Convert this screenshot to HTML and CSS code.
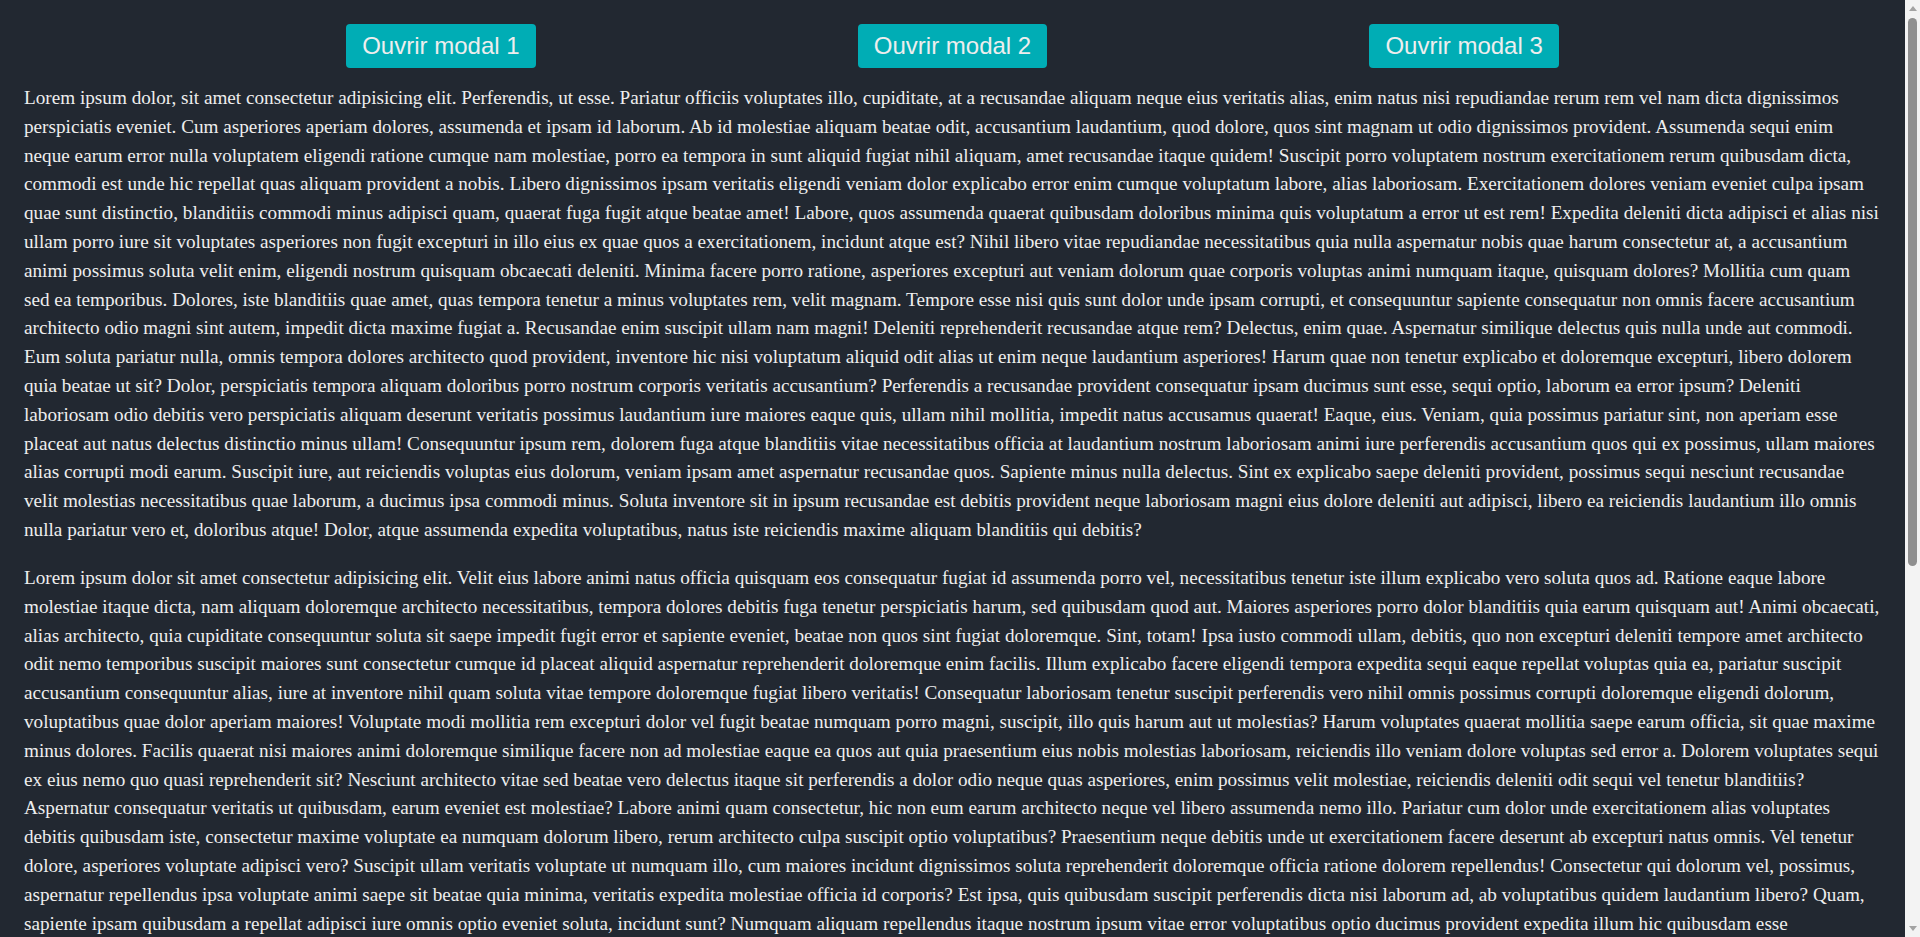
FILE: index.html
```html
<!DOCTYPE html>
<html lang="fr">
<head>
<meta charset="utf-8">
<title>Modals</title>
<link rel="stylesheet" href="styles.css">
</head>
<body>
<div class="actions">
  <button class="btn" type="button">Ouvrir modal 1</button>
  <button class="btn" type="button">Ouvrir modal 2</button>
  <button class="btn" type="button">Ouvrir modal 3</button>
</div>
<p class="text">Lorem ipsum dolor, sit amet consectetur adipisicing elit. Perferendis, ut esse. Pariatur officiis voluptates illo, cupiditate, at a recusandae aliquam neque eius veritatis alias, enim natus nisi repudiandae rerum rem vel nam dicta dignissimos perspiciatis eveniet. Cum asperiores aperiam dolores, assumenda et ipsam id laborum. Ab id molestiae aliquam beatae odit, accusantium laudantium, quod dolore, quos sint magnam ut odio dignissimos provident. Assumenda sequi enim neque earum error nulla voluptatem eligendi ratione cumque nam molestiae, porro ea tempora in sunt aliquid fugiat nihil aliquam, amet recusandae itaque quidem! Suscipit porro voluptatem nostrum exercitationem rerum quibusdam dicta, commodi est unde hic repellat quas aliquam provident a nobis. Libero dignissimos ipsam veritatis eligendi veniam dolor explicabo error enim cumque voluptatum labore, alias laboriosam. Exercitationem dolores veniam eveniet culpa ipsam quae sunt distinctio, blanditiis commodi minus adipisci quam, quaerat fuga fugit atque beatae amet! Labore, quos assumenda quaerat quibusdam doloribus minima quis voluptatum a error ut est rem! Expedita deleniti dicta adipisci et alias nisi ullam porro iure sit voluptates asperiores non fugit excepturi in illo eius ex quae quos a exercitationem, incidunt atque est? Nihil libero vitae repudiandae necessitatibus quia nulla aspernatur nobis quae harum consectetur at, a accusantium animi possimus soluta velit enim, eligendi nostrum quisquam obcaecati deleniti. Minima facere porro ratione, asperiores excepturi aut veniam dolorum quae corporis voluptas animi numquam itaque, quisquam dolores? Mollitia cum quam sed ea temporibus. Dolores, iste blanditiis quae amet, quas tempora tenetur a minus voluptates rem, velit magnam. Tempore esse nisi quis sunt dolor unde ipsam corrupti, et consequuntur sapiente consequatur non omnis facere accusantium architecto odio magni sint autem, impedit dicta maxime fugiat a. Recusandae enim suscipit ullam nam magni! Deleniti reprehenderit recusandae atque rem? Delectus, enim quae. Aspernatur similique delectus quis nulla unde aut commodi. Eum soluta pariatur nulla, omnis tempora dolores architecto quod provident, inventore hic nisi voluptatum aliquid odit alias ut enim neque laudantium asperiores! Harum quae non tenetur explicabo et doloremque excepturi, libero dolorem quia beatae ut sit? Dolor, perspiciatis tempora aliquam doloribus porro nostrum corporis veritatis accusantium? Perferendis a recusandae provident consequatur ipsam ducimus sunt esse, sequi optio, laborum ea error ipsum? Deleniti laboriosam odio debitis vero perspiciatis aliquam deserunt veritatis possimus laudantium iure maiores eaque quis, ullam nihil mollitia, impedit natus accusamus quaerat! Eaque, eius. Veniam, quia possimus pariatur sint, non aperiam esse placeat aut natus delectus distinctio minus ullam! Consequuntur ipsum rem, dolorem fuga atque blanditiis vitae necessitatibus officia at laudantium nostrum laboriosam animi iure perferendis accusantium quos qui ex possimus, ullam maiores alias corrupti modi earum. Suscipit iure, aut reiciendis voluptas eius dolorum, veniam ipsam amet aspernatur recusandae quos. Sapiente minus nulla delectus. Sint ex explicabo saepe deleniti provident, possimus sequi nesciunt recusandae velit molestias necessitatibus quae laborum, a ducimus ipsa commodi minus. Soluta inventore sit in ipsum recusandae est debitis provident neque laboriosam magni eius dolore deleniti aut adipisci, libero ea reiciendis laudantium illo omnis nulla pariatur vero et, doloribus atque! Dolor, atque assumenda expedita voluptatibus, natus iste reiciendis maxime aliquam blanditiis qui debitis?</p>
<p class="text">Lorem ipsum dolor sit amet consectetur adipisicing elit. Velit eius labore animi natus officia quisquam eos consequatur fugiat id assumenda porro vel, necessitatibus tenetur iste illum explicabo vero soluta quos ad. Ratione eaque labore molestiae itaque dicta, nam aliquam doloremque architecto necessitatibus, tempora dolores debitis fuga tenetur perspiciatis harum, sed quibusdam quod aut. Maiores asperiores porro dolor blanditiis quia earum quisquam aut! Animi obcaecati, alias architecto, quia cupiditate consequuntur soluta sit saepe impedit fugit error et sapiente eveniet, beatae non quos sint fugiat doloremque. Sint, totam! Ipsa iusto commodi ullam, debitis, quo non excepturi deleniti tempore amet architecto odit nemo temporibus suscipit maiores sunt consectetur cumque id placeat aliquid aspernatur reprehenderit doloremque enim facilis. Illum explicabo facere eligendi tempora expedita sequi eaque repellat voluptas quia ea, pariatur suscipit accusantium consequuntur alias, iure at inventore nihil quam soluta vitae tempore doloremque fugiat libero veritatis! Consequatur laboriosam tenetur suscipit perferendis vero nihil omnis possimus corrupti doloremque eligendi dolorum, voluptatibus quae dolor aperiam maiores! Voluptate modi mollitia rem excepturi dolor vel fugit beatae numquam porro magni, suscipit, illo quis harum aut ut molestias? Harum voluptates quaerat mollitia saepe earum officia, sit quae maxime minus dolores. Facilis quaerat nisi maiores animi doloremque similique facere non ad molestiae eaque ea quos aut quia praesentium eius nobis molestias laboriosam, reiciendis illo veniam dolore voluptas sed error a. Dolorem voluptates sequi ex eius nemo quo quasi reprehenderit sit? Nesciunt architecto vitae sed beatae vero delectus itaque sit perferendis a dolor odio neque quas asperiores, enim possimus velit molestiae, reiciendis deleniti odit sequi vel tenetur blanditiis? Aspernatur consequatur veritatis ut quibusdam, earum eveniet est molestiae? Labore animi quam consectetur, hic non eum earum architecto neque vel libero assumenda nemo illo. Pariatur cum dolor unde exercitationem alias voluptates debitis quibusdam iste, consectetur maxime voluptate ea numquam dolorum libero, rerum architecto culpa suscipit optio voluptatibus? Praesentium neque debitis unde ut exercitationem facere deserunt ab excepturi natus omnis. Vel tenetur dolore, asperiores voluptate adipisci vero? Suscipit ullam veritatis voluptate ut numquam illo, cum maiores incidunt dignissimos soluta reprehenderit doloremque officia ratione dolorem repellendus! Consectetur qui dolorum vel, possimus, aspernatur repellendus ipsa voluptate animi saepe sit beatae quia minima, veritatis expedita molestiae officia id corporis? Est ipsa, quis quibusdam suscipit perferendis dicta nisi laborum ad, ab voluptatibus quidem laudantium libero? Quam, sapiente ipsam quibusdam a repellat adipisci iure omnis optio eveniet soluta, incidunt sunt? Numquam aliquam repellendus itaque nostrum ipsum vitae error voluptatibus optio ducimus provident expedita illum hic quibusdam esse consequuntur, nemo quae quas. Nobis, doloribus explicabo porro numquam fugiat ab cupiditate voluptatum aliquid officiis iusto sapiente ipsa eveniet maiores minus sit accusamus consequuntur sint. Quia quaerat cumque aspernatur sequi impedit nihil ipsam optio deserunt, iste rem molestias obcaecati distinctio corporis at eum, placeat libero architecto doloribus adipisci. Commodi, iure natus voluptates tempore ut officiis ducimus ipsam accusantium, exercitationem nostrum fugiat consequatur mollitia doloremque aliquid nisi similique quod quam expedita!</p>
<p class="text">Lorem ipsum dolor sit amet consectetur, adipisicing elit. Quisquam, voluptatem aperiam? Nostrum quibusdam eius odit voluptates, voluptas deserunt facere numquam laboriosam ratione cupiditate commodi dolores officiis magnam nulla cum sunt illo ut quos fugit. Ipsa, eveniet autem. Quos, doloribus error eligendi aspernatur sequi incidunt ipsum distinctio accusantium assumenda neque perspiciatis nesciunt tempore saepe quaerat dolores quisquam minima ad reprehenderit expedita officia facilis quidem! Repellat voluptatum maxime ipsam accusamus tempora necessitatibus similique laborum, dolorum deleniti vero architecto explicabo esse nobis modi, voluptatibus excepturi iure mollitia et rem unde fugiat consectetur sit? Ut minus iusto pariatur aliquam cumque vitae nam delectus aut, exercitationem ratione velit sunt fuga enim porro tenetur, eum consequatur reprehenderit asperiores odio dolor perferendis earum quas. Totam dolorem, quo ea iste sapiente quia eaque corrupti nihil repudiandae illum inventore labore odit blanditiis, rerum est reiciendis atque amet deserunt fugit harum omnis. Laboriosam dicta sint, eos earum repellendus adipisci nihil nisi molestias libero, in aut illo placeat vel cum consequatur voluptate ipsum esse rerum tempora iusto fugiat recusandae optio ex.</p>
<div class="scrollbar" aria-hidden="true">
  <span class="scroll-arrow scroll-up"></span>
  <span class="scroll-thumb"></span>
  <span class="scroll-arrow scroll-down"></span>
</div>
</body>
</html>
```

FILE: styles.css
```css
html {
  background: #222831;
}

body {
  margin: 0 15px 0 0;
  padding: 24px;
  background: #222831;
  color: #eeeeee;
  font-family: "Liberation Serif", "Times New Roman", serif;
  font-size: 19.2px;
  line-height: 1.5;
}

.actions {
  display: flex;
  justify-content: space-evenly;
  align-items: center;
}

.btn {
  font-family: "Liberation Sans", Arial, sans-serif;
  font-size: 24px;
  line-height: normal;
  padding: 8px 16px;
  margin: 0;
  border: none;
  border-radius: 4px;
  background: #00adb5;
  color: #eeeeee;
  cursor: pointer;
}

.text {
  margin: 1em 0;
  padding-right: 1px;
}

.actions + .text {
  margin-top: 16px;
}

/* fake browser scrollbar drawn over the page edge */
.scrollbar {
  position: fixed;
  top: 0;
  right: 0;
  width: 15px;
  height: 100vh;
  background: #f3f3f3;
  display: flex;
  flex-direction: column;
  align-items: center;
}

.scroll-arrow {
  width: 0;
  height: 0;
  border-left: 4px solid transparent;
  border-right: 4px solid transparent;
}

.scroll-up {
  margin-top: 6px;
  border-bottom: 5px solid #a3a3a3;
}

.scroll-thumb {
  margin-top: 7px;
  width: 9px;
  height: 548px;
  border-radius: 5px;
  background: #8f8f8f;
}

.scroll-down {
  margin-top: auto;
  margin-bottom: 6px;
  border-top: 5px solid #a3a3a3;
}
```
